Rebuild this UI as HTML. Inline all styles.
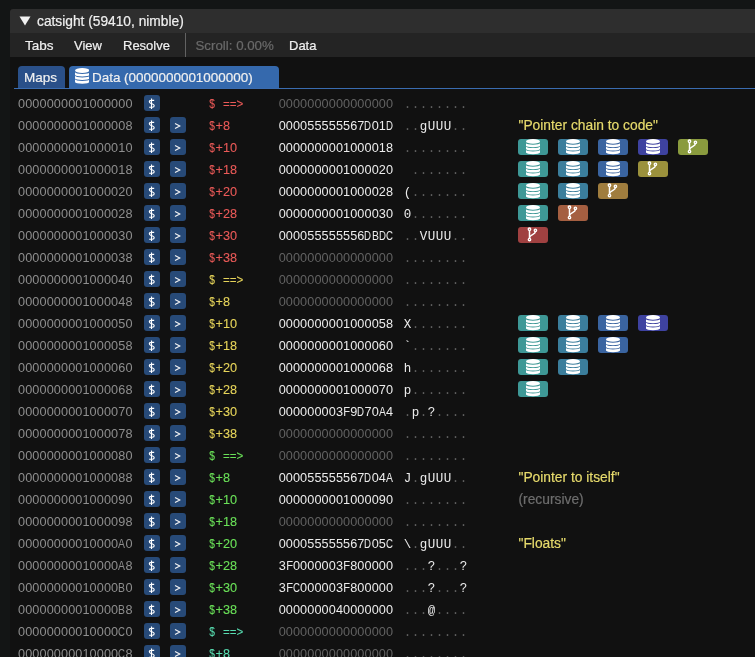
<!DOCTYPE html>
<html><head><meta charset="utf-8"><style>
html,body{margin:0;padding:0;}
body{width:755px;height:657px;overflow:hidden;background:#131515;position:relative;font-family:"Liberation Sans",sans-serif;-webkit-text-stroke:0.2px currentColor;}
.win{position:absolute;left:10px;top:9px;width:760px;height:660px;background:#111111;}
.title{position:absolute;left:10px;top:9px;width:760px;height:24px;background:#2e2e2e;border-top-left-radius:3px;}
.menu{position:absolute;left:10px;top:33px;width:760px;height:24px;background:#242424;}
.t{position:absolute;white-space:pre;color:#f0f0f0;}
.sep{position:absolute;left:185px;top:33px;width:1px;height:24px;background:#626262;}
.tab{position:absolute;top:66px;height:22px;border-radius:4px 4px 0 0;}
.tabline{position:absolute;left:14px;top:88px;width:760px;height:1px;background:#3a6cb0;}
.row{position:absolute;left:0;width:755px;height:22px;font-size:13px;line-height:22px;}
.row span{position:absolute;top:0;white-space:pre;}
.addr{left:18px;color:#8e8e8e;}
.addr b,.data b{font-weight:normal;display:inline-flex;justify-content:center;width:7.17px;}
.addr b.w7,.data b.w7{transform:scaleX(.76)} .addr b.w6,.data b.w6{transform:scaleX(.82)} .addr b.w5,.data b.w5{transform:scaleX(.88)}
.addr,.data{-webkit-text-stroke:0;font-size:12.7px;}
.row u{text-decoration:none;display:inline-block;}
.btn{width:16px;height:16px;top:2px !important;background:#274a78;border-radius:3px;color:#fff;text-align:center;line-height:16px;font-size:12px;}
.b1{left:144px;} .b2{left:170px;} .btn svg{position:absolute;left:0;top:0;}
.btn u{position:absolute;-webkit-text-stroke:0.1px #fff;}
.g1{left:4.8px;top:0.3px;font-size:12px;transform:scaleX(.85);transform-origin:0 50%;}
.g2{left:4.6px;top:1.2px;font-size:12px;transform:scaleX(.85);transform-origin:0 50%;}
.lbl{left:208.5px;font-size:12.7px;-webkit-text-stroke:0.1px currentColor;} .dl{transform:scaleX(.8);transform-origin:10% 50%;} .lbl2{-webkit-text-stroke:0.1px currentColor;left:222.5px;transform:scaleX(.89);transform-origin:0 0;}
.data{left:278.6px;color:#ececec;}
.data.dim{color:#626262;}
.asc{left:403.5px;top:1px !important;-webkit-text-stroke:0;font-family:"Liberation Mono",monospace;font-size:12.5px;}
.asc i{font-style:normal;display:inline-block;width:8px;text-align:center;}
.asc i.p{color:#ececec;} .asc i.np{color:#5e5e5e;}
.ibtn{width:30px;height:16px;border-radius:3px;top:2px !important;}
.ibtn svg{position:absolute;}
.ibtn svg.ic{left:8px;top:0;}
.ibtn svg.ib{left:0;top:0;}
.ann{left:518.5px;top:-0.4px !important;font-size:13.8px;}
</style></head><body><div id="root" style="position:absolute;left:0;top:0;width:755px;height:657px;will-change:transform">
<div class="win"></div>
<div class="title"></div>
<svg style="position:absolute;left:19px;top:16px" width="12" height="10" viewBox="0 0 12 10"><path d="M0.5 0.5H11.5L6 9.5Z" fill="#f0f0f0"/></svg>
<span class="t" style="left:37px;top:13px;font-size:13.75px;line-height:18px;">catsight (59410, nimble)</span>
<div class="menu"></div>
<span class="t" style="left:25px;top:36.7px;font-size:13.5px;line-height:18px;">Tabs</span>
<span class="t" style="left:74px;top:36.7px;font-size:13px;line-height:18px;">View</span>
<span class="t" style="left:123px;top:36.7px;font-size:13px;line-height:18px;">Resolve</span>
<div class="sep"></div>
<span class="t" style="left:195.5px;top:36.7px;font-size:13.3px;line-height:18px;color:#6a6a6a">Scroll: 0.00%</span>
<span class="t" style="left:289px;top:36.7px;font-size:13px;line-height:18px;">Data</span>
<div class="tab" style="left:18px;width:47px;background:#2a5089"></div>
<div class="tab" style="left:69px;width:210px;background:#3569ad"></div>
<div class="tabline"></div>
<span class="t" style="left:24px;top:68.6px;font-size:13.5px;line-height:18px;">Maps</span>
<svg width="14.5" height="16.5" viewBox="0 0 14 16" style="position:absolute;left:74.7px;top:68.1px"><ellipse cx="7" cy="2.4" rx="7" ry="2.4" fill="#fff"/><path d="M0 4.2v2.5a7 1.5 0 0 0 14 0v-2.5a7 1.5 0 0 1 -14 0z" fill="#fff"/><path d="M0 7.6v2.5a7 1.5 0 0 0 14 0v-2.5a7 1.5 0 0 1 -14 0z" fill="#fff"/><path d="M0 11v2.6a7 1.6 0 0 0 14 0v-2.6a7 1.5 0 0 1 -14 0z" fill="#fff"/></svg>
<span class="t" style="left:92px;top:68.6px;font-size:13.45px;line-height:18px;">Data (0000000001000000)</span>
<div class="row" style="top:93px"><span class="addr"><b>0</b><b>0</b><b>0</b><b>0</b><b>0</b><b>0</b><b>0</b><b>0</b><b>0</b><b>1</b><b>0</b><b>0</b><b>0</b><b>0</b><b>0</b><b>0</b></span><span class="btn b1"><svg width="16" height="16" viewBox="0 0 16 16"><path d="M10.2 5.3H7C5.9 5.3 5.3 5.9 5.3 6.8C5.3 7.8 6.1 8.2 7.3 8.6L8.5 9C9.6 9.4 10.2 9.9 10.2 10.8C10.2 11.7 9.5 12.2 8.4 12.2H5.1M7.5 3.6V14" fill="none" stroke="#fff" stroke-width="1.15"/></svg></span><span class="lbl" style="color:#ea5a58"><u class="dl">$</u></span><span class="lbl2" style="color:#ea5a58">==&gt;</span><span class="data dim"><b>0</b><b>0</b><b>0</b><b>0</b><b>0</b><b>0</b><b>0</b><b>0</b><b>0</b><b>0</b><b>0</b><b>0</b><b>0</b><b>0</b><b>0</b><b>0</b></span><span class="asc"><i class="np">.</i><i class="np">.</i><i class="np">.</i><i class="np">.</i><i class="np">.</i><i class="np">.</i><i class="np">.</i><i class="np">.</i></span></div><div class="row" style="top:115px"><span class="addr"><b>0</b><b>0</b><b>0</b><b>0</b><b>0</b><b>0</b><b>0</b><b>0</b><b>0</b><b>1</b><b>0</b><b>0</b><b>0</b><b>0</b><b>0</b><b>8</b></span><span class="btn b1"><svg width="16" height="16" viewBox="0 0 16 16"><path d="M10.2 5.3H7C5.9 5.3 5.3 5.9 5.3 6.8C5.3 7.8 6.1 8.2 7.3 8.6L8.5 9C9.6 9.4 10.2 9.9 10.2 10.8C10.2 11.7 9.5 12.2 8.4 12.2H5.1M7.5 3.6V14" fill="none" stroke="#fff" stroke-width="1.15"/></svg></span><span class="btn b2"><svg width="16" height="16" viewBox="0 0 16 16"><path d="M5 6.5L9.8 9L5 11.5" fill="none" stroke="#f4f4f4" stroke-width="1.1"/></svg></span><span class="lbl" style="color:#ea5a58"><u class="dl">$</u>+8</span><span class="data"><b>0</b><b>0</b><b>0</b><b>0</b><b>5</b><b>5</b><b>5</b><b>5</b><b>5</b><b>5</b><b>6</b><b>7</b><b class="w7">D</b><b>0</b><b>1</b><b class="w7">D</b></span><span class="asc"><i class="np">.</i><i class="np">.</i><i class="p">g</i><i class="p">U</i><i class="p">U</i><i class="p">U</i><i class="np">.</i><i class="np">.</i></span><span class="ann" style="color:#e6da6c">&quot;Pointer chain to code&quot;</span></div><div class="row" style="top:137px"><span class="addr"><b>0</b><b>0</b><b>0</b><b>0</b><b>0</b><b>0</b><b>0</b><b>0</b><b>0</b><b>1</b><b>0</b><b>0</b><b>0</b><b>0</b><b>1</b><b>0</b></span><span class="btn b1"><svg width="16" height="16" viewBox="0 0 16 16"><path d="M10.2 5.3H7C5.9 5.3 5.3 5.9 5.3 6.8C5.3 7.8 6.1 8.2 7.3 8.6L8.5 9C9.6 9.4 10.2 9.9 10.2 10.8C10.2 11.7 9.5 12.2 8.4 12.2H5.1M7.5 3.6V14" fill="none" stroke="#fff" stroke-width="1.15"/></svg></span><span class="btn b2"><svg width="16" height="16" viewBox="0 0 16 16"><path d="M5 6.5L9.8 9L5 11.5" fill="none" stroke="#f4f4f4" stroke-width="1.1"/></svg></span><span class="lbl" style="color:#ea5a58"><u class="dl">$</u>+10</span><span class="data"><b>0</b><b>0</b><b>0</b><b>0</b><b>0</b><b>0</b><b>0</b><b>0</b><b>0</b><b>1</b><b>0</b><b>0</b><b>0</b><b>0</b><b>1</b><b>8</b></span><span class="asc"><i class="np">.</i><i class="np">.</i><i class="np">.</i><i class="np">.</i><i class="np">.</i><i class="np">.</i><i class="np">.</i><i class="np">.</i></span><span class="ibtn" style="left:518px;background:#3e9896"><svg class="ic" width="14" height="16" viewBox="0 0 14 16"><ellipse cx="7" cy="2.4" rx="7" ry="2.4" fill="#fff"/><path d="M0 4.2v2.5a7 1.5 0 0 0 14 0v-2.5a7 1.5 0 0 1 -14 0z" fill="#fff"/><path d="M0 7.6v2.5a7 1.5 0 0 0 14 0v-2.5a7 1.5 0 0 1 -14 0z" fill="#fff"/><path d="M0 11v2.6a7 1.6 0 0 0 14 0v-2.6a7 1.5 0 0 1 -14 0z" fill="#fff"/></svg></span><span class="ibtn" style="left:558px;background:#3b7e9c"><svg class="ic" width="14" height="16" viewBox="0 0 14 16"><ellipse cx="7" cy="2.4" rx="7" ry="2.4" fill="#fff"/><path d="M0 4.2v2.5a7 1.5 0 0 0 14 0v-2.5a7 1.5 0 0 1 -14 0z" fill="#fff"/><path d="M0 7.6v2.5a7 1.5 0 0 0 14 0v-2.5a7 1.5 0 0 1 -14 0z" fill="#fff"/><path d="M0 11v2.6a7 1.6 0 0 0 14 0v-2.6a7 1.5 0 0 1 -14 0z" fill="#fff"/></svg></span><span class="ibtn" style="left:598px;background:#3a64a0"><svg class="ic" width="14" height="16" viewBox="0 0 14 16"><ellipse cx="7" cy="2.4" rx="7" ry="2.4" fill="#fff"/><path d="M0 4.2v2.5a7 1.5 0 0 0 14 0v-2.5a7 1.5 0 0 1 -14 0z" fill="#fff"/><path d="M0 7.6v2.5a7 1.5 0 0 0 14 0v-2.5a7 1.5 0 0 1 -14 0z" fill="#fff"/><path d="M0 11v2.6a7 1.6 0 0 0 14 0v-2.6a7 1.5 0 0 1 -14 0z" fill="#fff"/></svg></span><span class="ibtn" style="left:638px;background:#3e42a0"><svg class="ic" width="14" height="16" viewBox="0 0 14 16"><ellipse cx="7" cy="2.4" rx="7" ry="2.4" fill="#fff"/><path d="M0 4.2v2.5a7 1.5 0 0 0 14 0v-2.5a7 1.5 0 0 1 -14 0z" fill="#fff"/><path d="M0 7.6v2.5a7 1.5 0 0 0 14 0v-2.5a7 1.5 0 0 1 -14 0z" fill="#fff"/><path d="M0 11v2.6a7 1.6 0 0 0 14 0v-2.6a7 1.5 0 0 1 -14 0z" fill="#fff"/></svg></span><span class="ibtn" style="left:678px;background:#8a9b3e"><svg class="ib" width="30" height="16" viewBox="0 0 30 16"><g fill="none" stroke="#fff" stroke-width="1.35"><circle cx="11.5" cy="2.2" r="1.2"/><circle cx="17.4" cy="3.3" r="1.2"/><circle cx="11.5" cy="12.5" r="1.2"/><path d="M11.5 3.4V11.3" stroke-width="1.5"/><path d="M17.4 4.5C17.4 7.8 11.6 7.4 11.5 10.8" stroke-width="1.5"/></g></svg></span></div><div class="row" style="top:159px"><span class="addr"><b>0</b><b>0</b><b>0</b><b>0</b><b>0</b><b>0</b><b>0</b><b>0</b><b>0</b><b>1</b><b>0</b><b>0</b><b>0</b><b>0</b><b>1</b><b>8</b></span><span class="btn b1"><svg width="16" height="16" viewBox="0 0 16 16"><path d="M10.2 5.3H7C5.9 5.3 5.3 5.9 5.3 6.8C5.3 7.8 6.1 8.2 7.3 8.6L8.5 9C9.6 9.4 10.2 9.9 10.2 10.8C10.2 11.7 9.5 12.2 8.4 12.2H5.1M7.5 3.6V14" fill="none" stroke="#fff" stroke-width="1.15"/></svg></span><span class="btn b2"><svg width="16" height="16" viewBox="0 0 16 16"><path d="M5 6.5L9.8 9L5 11.5" fill="none" stroke="#f4f4f4" stroke-width="1.1"/></svg></span><span class="lbl" style="color:#ea5a58"><u class="dl">$</u>+18</span><span class="data"><b>0</b><b>0</b><b>0</b><b>0</b><b>0</b><b>0</b><b>0</b><b>0</b><b>0</b><b>1</b><b>0</b><b>0</b><b>0</b><b>0</b><b>2</b><b>0</b></span><span class="asc"><i class="p">&nbsp;</i><i class="np">.</i><i class="np">.</i><i class="np">.</i><i class="np">.</i><i class="np">.</i><i class="np">.</i><i class="np">.</i></span><span class="ibtn" style="left:518px;background:#3e9896"><svg class="ic" width="14" height="16" viewBox="0 0 14 16"><ellipse cx="7" cy="2.4" rx="7" ry="2.4" fill="#fff"/><path d="M0 4.2v2.5a7 1.5 0 0 0 14 0v-2.5a7 1.5 0 0 1 -14 0z" fill="#fff"/><path d="M0 7.6v2.5a7 1.5 0 0 0 14 0v-2.5a7 1.5 0 0 1 -14 0z" fill="#fff"/><path d="M0 11v2.6a7 1.6 0 0 0 14 0v-2.6a7 1.5 0 0 1 -14 0z" fill="#fff"/></svg></span><span class="ibtn" style="left:558px;background:#3b7e9c"><svg class="ic" width="14" height="16" viewBox="0 0 14 16"><ellipse cx="7" cy="2.4" rx="7" ry="2.4" fill="#fff"/><path d="M0 4.2v2.5a7 1.5 0 0 0 14 0v-2.5a7 1.5 0 0 1 -14 0z" fill="#fff"/><path d="M0 7.6v2.5a7 1.5 0 0 0 14 0v-2.5a7 1.5 0 0 1 -14 0z" fill="#fff"/><path d="M0 11v2.6a7 1.6 0 0 0 14 0v-2.6a7 1.5 0 0 1 -14 0z" fill="#fff"/></svg></span><span class="ibtn" style="left:598px;background:#3a64a0"><svg class="ic" width="14" height="16" viewBox="0 0 14 16"><ellipse cx="7" cy="2.4" rx="7" ry="2.4" fill="#fff"/><path d="M0 4.2v2.5a7 1.5 0 0 0 14 0v-2.5a7 1.5 0 0 1 -14 0z" fill="#fff"/><path d="M0 7.6v2.5a7 1.5 0 0 0 14 0v-2.5a7 1.5 0 0 1 -14 0z" fill="#fff"/><path d="M0 11v2.6a7 1.6 0 0 0 14 0v-2.6a7 1.5 0 0 1 -14 0z" fill="#fff"/></svg></span><span class="ibtn" style="left:638px;background:#9b913c"><svg class="ib" width="30" height="16" viewBox="0 0 30 16"><g fill="none" stroke="#fff" stroke-width="1.35"><circle cx="11.5" cy="2.2" r="1.2"/><circle cx="17.4" cy="3.3" r="1.2"/><circle cx="11.5" cy="12.5" r="1.2"/><path d="M11.5 3.4V11.3" stroke-width="1.5"/><path d="M17.4 4.5C17.4 7.8 11.6 7.4 11.5 10.8" stroke-width="1.5"/></g></svg></span></div><div class="row" style="top:181px"><span class="addr"><b>0</b><b>0</b><b>0</b><b>0</b><b>0</b><b>0</b><b>0</b><b>0</b><b>0</b><b>1</b><b>0</b><b>0</b><b>0</b><b>0</b><b>2</b><b>0</b></span><span class="btn b1"><svg width="16" height="16" viewBox="0 0 16 16"><path d="M10.2 5.3H7C5.9 5.3 5.3 5.9 5.3 6.8C5.3 7.8 6.1 8.2 7.3 8.6L8.5 9C9.6 9.4 10.2 9.9 10.2 10.8C10.2 11.7 9.5 12.2 8.4 12.2H5.1M7.5 3.6V14" fill="none" stroke="#fff" stroke-width="1.15"/></svg></span><span class="btn b2"><svg width="16" height="16" viewBox="0 0 16 16"><path d="M5 6.5L9.8 9L5 11.5" fill="none" stroke="#f4f4f4" stroke-width="1.1"/></svg></span><span class="lbl" style="color:#ea5a58"><u class="dl">$</u>+20</span><span class="data"><b>0</b><b>0</b><b>0</b><b>0</b><b>0</b><b>0</b><b>0</b><b>0</b><b>0</b><b>1</b><b>0</b><b>0</b><b>0</b><b>0</b><b>2</b><b>8</b></span><span class="asc"><i class="p">(</i><i class="np">.</i><i class="np">.</i><i class="np">.</i><i class="np">.</i><i class="np">.</i><i class="np">.</i><i class="np">.</i></span><span class="ibtn" style="left:518px;background:#3e9896"><svg class="ic" width="14" height="16" viewBox="0 0 14 16"><ellipse cx="7" cy="2.4" rx="7" ry="2.4" fill="#fff"/><path d="M0 4.2v2.5a7 1.5 0 0 0 14 0v-2.5a7 1.5 0 0 1 -14 0z" fill="#fff"/><path d="M0 7.6v2.5a7 1.5 0 0 0 14 0v-2.5a7 1.5 0 0 1 -14 0z" fill="#fff"/><path d="M0 11v2.6a7 1.6 0 0 0 14 0v-2.6a7 1.5 0 0 1 -14 0z" fill="#fff"/></svg></span><span class="ibtn" style="left:558px;background:#3b7e9c"><svg class="ic" width="14" height="16" viewBox="0 0 14 16"><ellipse cx="7" cy="2.4" rx="7" ry="2.4" fill="#fff"/><path d="M0 4.2v2.5a7 1.5 0 0 0 14 0v-2.5a7 1.5 0 0 1 -14 0z" fill="#fff"/><path d="M0 7.6v2.5a7 1.5 0 0 0 14 0v-2.5a7 1.5 0 0 1 -14 0z" fill="#fff"/><path d="M0 11v2.6a7 1.6 0 0 0 14 0v-2.6a7 1.5 0 0 1 -14 0z" fill="#fff"/></svg></span><span class="ibtn" style="left:598px;background:#a07d3e"><svg class="ib" width="30" height="16" viewBox="0 0 30 16"><g fill="none" stroke="#fff" stroke-width="1.35"><circle cx="11.5" cy="2.2" r="1.2"/><circle cx="17.4" cy="3.3" r="1.2"/><circle cx="11.5" cy="12.5" r="1.2"/><path d="M11.5 3.4V11.3" stroke-width="1.5"/><path d="M17.4 4.5C17.4 7.8 11.6 7.4 11.5 10.8" stroke-width="1.5"/></g></svg></span></div><div class="row" style="top:203px"><span class="addr"><b>0</b><b>0</b><b>0</b><b>0</b><b>0</b><b>0</b><b>0</b><b>0</b><b>0</b><b>1</b><b>0</b><b>0</b><b>0</b><b>0</b><b>2</b><b>8</b></span><span class="btn b1"><svg width="16" height="16" viewBox="0 0 16 16"><path d="M10.2 5.3H7C5.9 5.3 5.3 5.9 5.3 6.8C5.3 7.8 6.1 8.2 7.3 8.6L8.5 9C9.6 9.4 10.2 9.9 10.2 10.8C10.2 11.7 9.5 12.2 8.4 12.2H5.1M7.5 3.6V14" fill="none" stroke="#fff" stroke-width="1.15"/></svg></span><span class="btn b2"><svg width="16" height="16" viewBox="0 0 16 16"><path d="M5 6.5L9.8 9L5 11.5" fill="none" stroke="#f4f4f4" stroke-width="1.1"/></svg></span><span class="lbl" style="color:#ea5a58"><u class="dl">$</u>+28</span><span class="data"><b>0</b><b>0</b><b>0</b><b>0</b><b>0</b><b>0</b><b>0</b><b>0</b><b>0</b><b>1</b><b>0</b><b>0</b><b>0</b><b>0</b><b>3</b><b>0</b></span><span class="asc"><i class="p">0</i><i class="np">.</i><i class="np">.</i><i class="np">.</i><i class="np">.</i><i class="np">.</i><i class="np">.</i><i class="np">.</i></span><span class="ibtn" style="left:518px;background:#3e9896"><svg class="ic" width="14" height="16" viewBox="0 0 14 16"><ellipse cx="7" cy="2.4" rx="7" ry="2.4" fill="#fff"/><path d="M0 4.2v2.5a7 1.5 0 0 0 14 0v-2.5a7 1.5 0 0 1 -14 0z" fill="#fff"/><path d="M0 7.6v2.5a7 1.5 0 0 0 14 0v-2.5a7 1.5 0 0 1 -14 0z" fill="#fff"/><path d="M0 11v2.6a7 1.6 0 0 0 14 0v-2.6a7 1.5 0 0 1 -14 0z" fill="#fff"/></svg></span><span class="ibtn" style="left:558px;background:#a55f41"><svg class="ib" width="30" height="16" viewBox="0 0 30 16"><g fill="none" stroke="#fff" stroke-width="1.35"><circle cx="11.5" cy="2.2" r="1.2"/><circle cx="17.4" cy="3.3" r="1.2"/><circle cx="11.5" cy="12.5" r="1.2"/><path d="M11.5 3.4V11.3" stroke-width="1.5"/><path d="M17.4 4.5C17.4 7.8 11.6 7.4 11.5 10.8" stroke-width="1.5"/></g></svg></span></div><div class="row" style="top:225px"><span class="addr"><b>0</b><b>0</b><b>0</b><b>0</b><b>0</b><b>0</b><b>0</b><b>0</b><b>0</b><b>1</b><b>0</b><b>0</b><b>0</b><b>0</b><b>3</b><b>0</b></span><span class="btn b1"><svg width="16" height="16" viewBox="0 0 16 16"><path d="M10.2 5.3H7C5.9 5.3 5.3 5.9 5.3 6.8C5.3 7.8 6.1 8.2 7.3 8.6L8.5 9C9.6 9.4 10.2 9.9 10.2 10.8C10.2 11.7 9.5 12.2 8.4 12.2H5.1M7.5 3.6V14" fill="none" stroke="#fff" stroke-width="1.15"/></svg></span><span class="btn b2"><svg width="16" height="16" viewBox="0 0 16 16"><path d="M5 6.5L9.8 9L5 11.5" fill="none" stroke="#f4f4f4" stroke-width="1.1"/></svg></span><span class="lbl" style="color:#ea5a58"><u class="dl">$</u>+30</span><span class="data"><b>0</b><b>0</b><b>0</b><b>0</b><b>5</b><b>5</b><b>5</b><b>5</b><b>5</b><b>5</b><b>5</b><b>6</b><b class="w7">D</b><b class="w6">B</b><b class="w7">D</b><b class="w7">C</b></span><span class="asc"><i class="np">.</i><i class="np">.</i><i class="p">V</i><i class="p">U</i><i class="p">U</i><i class="p">U</i><i class="np">.</i><i class="np">.</i></span><span class="ibtn" style="left:518px;background:#a04141"><svg class="ib" width="30" height="16" viewBox="0 0 30 16"><g fill="none" stroke="#fff" stroke-width="1.35"><circle cx="11.5" cy="2.2" r="1.2"/><circle cx="17.4" cy="3.3" r="1.2"/><circle cx="11.5" cy="12.5" r="1.2"/><path d="M11.5 3.4V11.3" stroke-width="1.5"/><path d="M17.4 4.5C17.4 7.8 11.6 7.4 11.5 10.8" stroke-width="1.5"/></g></svg></span></div><div class="row" style="top:247px"><span class="addr"><b>0</b><b>0</b><b>0</b><b>0</b><b>0</b><b>0</b><b>0</b><b>0</b><b>0</b><b>1</b><b>0</b><b>0</b><b>0</b><b>0</b><b>3</b><b>8</b></span><span class="btn b1"><svg width="16" height="16" viewBox="0 0 16 16"><path d="M10.2 5.3H7C5.9 5.3 5.3 5.9 5.3 6.8C5.3 7.8 6.1 8.2 7.3 8.6L8.5 9C9.6 9.4 10.2 9.9 10.2 10.8C10.2 11.7 9.5 12.2 8.4 12.2H5.1M7.5 3.6V14" fill="none" stroke="#fff" stroke-width="1.15"/></svg></span><span class="btn b2"><svg width="16" height="16" viewBox="0 0 16 16"><path d="M5 6.5L9.8 9L5 11.5" fill="none" stroke="#f4f4f4" stroke-width="1.1"/></svg></span><span class="lbl" style="color:#ea5a58"><u class="dl">$</u>+38</span><span class="data dim"><b>0</b><b>0</b><b>0</b><b>0</b><b>0</b><b>0</b><b>0</b><b>0</b><b>0</b><b>0</b><b>0</b><b>0</b><b>0</b><b>0</b><b>0</b><b>0</b></span><span class="asc"><i class="np">.</i><i class="np">.</i><i class="np">.</i><i class="np">.</i><i class="np">.</i><i class="np">.</i><i class="np">.</i><i class="np">.</i></span></div><div class="row" style="top:269px"><span class="addr"><b>0</b><b>0</b><b>0</b><b>0</b><b>0</b><b>0</b><b>0</b><b>0</b><b>0</b><b>1</b><b>0</b><b>0</b><b>0</b><b>0</b><b>4</b><b>0</b></span><span class="btn b1"><svg width="16" height="16" viewBox="0 0 16 16"><path d="M10.2 5.3H7C5.9 5.3 5.3 5.9 5.3 6.8C5.3 7.8 6.1 8.2 7.3 8.6L8.5 9C9.6 9.4 10.2 9.9 10.2 10.8C10.2 11.7 9.5 12.2 8.4 12.2H5.1M7.5 3.6V14" fill="none" stroke="#fff" stroke-width="1.15"/></svg></span><span class="btn b2"><svg width="16" height="16" viewBox="0 0 16 16"><path d="M5 6.5L9.8 9L5 11.5" fill="none" stroke="#f4f4f4" stroke-width="1.1"/></svg></span><span class="lbl" style="color:#e6d45a"><u class="dl">$</u></span><span class="lbl2" style="color:#e6d45a">==&gt;</span><span class="data dim"><b>0</b><b>0</b><b>0</b><b>0</b><b>0</b><b>0</b><b>0</b><b>0</b><b>0</b><b>0</b><b>0</b><b>0</b><b>0</b><b>0</b><b>0</b><b>0</b></span><span class="asc"><i class="np">.</i><i class="np">.</i><i class="np">.</i><i class="np">.</i><i class="np">.</i><i class="np">.</i><i class="np">.</i><i class="np">.</i></span></div><div class="row" style="top:291px"><span class="addr"><b>0</b><b>0</b><b>0</b><b>0</b><b>0</b><b>0</b><b>0</b><b>0</b><b>0</b><b>1</b><b>0</b><b>0</b><b>0</b><b>0</b><b>4</b><b>8</b></span><span class="btn b1"><svg width="16" height="16" viewBox="0 0 16 16"><path d="M10.2 5.3H7C5.9 5.3 5.3 5.9 5.3 6.8C5.3 7.8 6.1 8.2 7.3 8.6L8.5 9C9.6 9.4 10.2 9.9 10.2 10.8C10.2 11.7 9.5 12.2 8.4 12.2H5.1M7.5 3.6V14" fill="none" stroke="#fff" stroke-width="1.15"/></svg></span><span class="btn b2"><svg width="16" height="16" viewBox="0 0 16 16"><path d="M5 6.5L9.8 9L5 11.5" fill="none" stroke="#f4f4f4" stroke-width="1.1"/></svg></span><span class="lbl" style="color:#e6d45a"><u class="dl">$</u>+8</span><span class="data dim"><b>0</b><b>0</b><b>0</b><b>0</b><b>0</b><b>0</b><b>0</b><b>0</b><b>0</b><b>0</b><b>0</b><b>0</b><b>0</b><b>0</b><b>0</b><b>0</b></span><span class="asc"><i class="np">.</i><i class="np">.</i><i class="np">.</i><i class="np">.</i><i class="np">.</i><i class="np">.</i><i class="np">.</i><i class="np">.</i></span></div><div class="row" style="top:313px"><span class="addr"><b>0</b><b>0</b><b>0</b><b>0</b><b>0</b><b>0</b><b>0</b><b>0</b><b>0</b><b>1</b><b>0</b><b>0</b><b>0</b><b>0</b><b>5</b><b>0</b></span><span class="btn b1"><svg width="16" height="16" viewBox="0 0 16 16"><path d="M10.2 5.3H7C5.9 5.3 5.3 5.9 5.3 6.8C5.3 7.8 6.1 8.2 7.3 8.6L8.5 9C9.6 9.4 10.2 9.9 10.2 10.8C10.2 11.7 9.5 12.2 8.4 12.2H5.1M7.5 3.6V14" fill="none" stroke="#fff" stroke-width="1.15"/></svg></span><span class="btn b2"><svg width="16" height="16" viewBox="0 0 16 16"><path d="M5 6.5L9.8 9L5 11.5" fill="none" stroke="#f4f4f4" stroke-width="1.1"/></svg></span><span class="lbl" style="color:#e6d45a"><u class="dl">$</u>+10</span><span class="data"><b>0</b><b>0</b><b>0</b><b>0</b><b>0</b><b>0</b><b>0</b><b>0</b><b>0</b><b>1</b><b>0</b><b>0</b><b>0</b><b>0</b><b>5</b><b>8</b></span><span class="asc"><i class="p">X</i><i class="np">.</i><i class="np">.</i><i class="np">.</i><i class="np">.</i><i class="np">.</i><i class="np">.</i><i class="np">.</i></span><span class="ibtn" style="left:518px;background:#3e9896"><svg class="ic" width="14" height="16" viewBox="0 0 14 16"><ellipse cx="7" cy="2.4" rx="7" ry="2.4" fill="#fff"/><path d="M0 4.2v2.5a7 1.5 0 0 0 14 0v-2.5a7 1.5 0 0 1 -14 0z" fill="#fff"/><path d="M0 7.6v2.5a7 1.5 0 0 0 14 0v-2.5a7 1.5 0 0 1 -14 0z" fill="#fff"/><path d="M0 11v2.6a7 1.6 0 0 0 14 0v-2.6a7 1.5 0 0 1 -14 0z" fill="#fff"/></svg></span><span class="ibtn" style="left:558px;background:#3b7e9c"><svg class="ic" width="14" height="16" viewBox="0 0 14 16"><ellipse cx="7" cy="2.4" rx="7" ry="2.4" fill="#fff"/><path d="M0 4.2v2.5a7 1.5 0 0 0 14 0v-2.5a7 1.5 0 0 1 -14 0z" fill="#fff"/><path d="M0 7.6v2.5a7 1.5 0 0 0 14 0v-2.5a7 1.5 0 0 1 -14 0z" fill="#fff"/><path d="M0 11v2.6a7 1.6 0 0 0 14 0v-2.6a7 1.5 0 0 1 -14 0z" fill="#fff"/></svg></span><span class="ibtn" style="left:598px;background:#3a64a0"><svg class="ic" width="14" height="16" viewBox="0 0 14 16"><ellipse cx="7" cy="2.4" rx="7" ry="2.4" fill="#fff"/><path d="M0 4.2v2.5a7 1.5 0 0 0 14 0v-2.5a7 1.5 0 0 1 -14 0z" fill="#fff"/><path d="M0 7.6v2.5a7 1.5 0 0 0 14 0v-2.5a7 1.5 0 0 1 -14 0z" fill="#fff"/><path d="M0 11v2.6a7 1.6 0 0 0 14 0v-2.6a7 1.5 0 0 1 -14 0z" fill="#fff"/></svg></span><span class="ibtn" style="left:638px;background:#3e42a0"><svg class="ic" width="14" height="16" viewBox="0 0 14 16"><ellipse cx="7" cy="2.4" rx="7" ry="2.4" fill="#fff"/><path d="M0 4.2v2.5a7 1.5 0 0 0 14 0v-2.5a7 1.5 0 0 1 -14 0z" fill="#fff"/><path d="M0 7.6v2.5a7 1.5 0 0 0 14 0v-2.5a7 1.5 0 0 1 -14 0z" fill="#fff"/><path d="M0 11v2.6a7 1.6 0 0 0 14 0v-2.6a7 1.5 0 0 1 -14 0z" fill="#fff"/></svg></span></div><div class="row" style="top:335px"><span class="addr"><b>0</b><b>0</b><b>0</b><b>0</b><b>0</b><b>0</b><b>0</b><b>0</b><b>0</b><b>1</b><b>0</b><b>0</b><b>0</b><b>0</b><b>5</b><b>8</b></span><span class="btn b1"><svg width="16" height="16" viewBox="0 0 16 16"><path d="M10.2 5.3H7C5.9 5.3 5.3 5.9 5.3 6.8C5.3 7.8 6.1 8.2 7.3 8.6L8.5 9C9.6 9.4 10.2 9.9 10.2 10.8C10.2 11.7 9.5 12.2 8.4 12.2H5.1M7.5 3.6V14" fill="none" stroke="#fff" stroke-width="1.15"/></svg></span><span class="btn b2"><svg width="16" height="16" viewBox="0 0 16 16"><path d="M5 6.5L9.8 9L5 11.5" fill="none" stroke="#f4f4f4" stroke-width="1.1"/></svg></span><span class="lbl" style="color:#e6d45a"><u class="dl">$</u>+18</span><span class="data"><b>0</b><b>0</b><b>0</b><b>0</b><b>0</b><b>0</b><b>0</b><b>0</b><b>0</b><b>1</b><b>0</b><b>0</b><b>0</b><b>0</b><b>6</b><b>0</b></span><span class="asc"><i class="p">`</i><i class="np">.</i><i class="np">.</i><i class="np">.</i><i class="np">.</i><i class="np">.</i><i class="np">.</i><i class="np">.</i></span><span class="ibtn" style="left:518px;background:#3e9896"><svg class="ic" width="14" height="16" viewBox="0 0 14 16"><ellipse cx="7" cy="2.4" rx="7" ry="2.4" fill="#fff"/><path d="M0 4.2v2.5a7 1.5 0 0 0 14 0v-2.5a7 1.5 0 0 1 -14 0z" fill="#fff"/><path d="M0 7.6v2.5a7 1.5 0 0 0 14 0v-2.5a7 1.5 0 0 1 -14 0z" fill="#fff"/><path d="M0 11v2.6a7 1.6 0 0 0 14 0v-2.6a7 1.5 0 0 1 -14 0z" fill="#fff"/></svg></span><span class="ibtn" style="left:558px;background:#3b7e9c"><svg class="ic" width="14" height="16" viewBox="0 0 14 16"><ellipse cx="7" cy="2.4" rx="7" ry="2.4" fill="#fff"/><path d="M0 4.2v2.5a7 1.5 0 0 0 14 0v-2.5a7 1.5 0 0 1 -14 0z" fill="#fff"/><path d="M0 7.6v2.5a7 1.5 0 0 0 14 0v-2.5a7 1.5 0 0 1 -14 0z" fill="#fff"/><path d="M0 11v2.6a7 1.6 0 0 0 14 0v-2.6a7 1.5 0 0 1 -14 0z" fill="#fff"/></svg></span><span class="ibtn" style="left:598px;background:#3a64a0"><svg class="ic" width="14" height="16" viewBox="0 0 14 16"><ellipse cx="7" cy="2.4" rx="7" ry="2.4" fill="#fff"/><path d="M0 4.2v2.5a7 1.5 0 0 0 14 0v-2.5a7 1.5 0 0 1 -14 0z" fill="#fff"/><path d="M0 7.6v2.5a7 1.5 0 0 0 14 0v-2.5a7 1.5 0 0 1 -14 0z" fill="#fff"/><path d="M0 11v2.6a7 1.6 0 0 0 14 0v-2.6a7 1.5 0 0 1 -14 0z" fill="#fff"/></svg></span></div><div class="row" style="top:357px"><span class="addr"><b>0</b><b>0</b><b>0</b><b>0</b><b>0</b><b>0</b><b>0</b><b>0</b><b>0</b><b>1</b><b>0</b><b>0</b><b>0</b><b>0</b><b>6</b><b>0</b></span><span class="btn b1"><svg width="16" height="16" viewBox="0 0 16 16"><path d="M10.2 5.3H7C5.9 5.3 5.3 5.9 5.3 6.8C5.3 7.8 6.1 8.2 7.3 8.6L8.5 9C9.6 9.4 10.2 9.9 10.2 10.8C10.2 11.7 9.5 12.2 8.4 12.2H5.1M7.5 3.6V14" fill="none" stroke="#fff" stroke-width="1.15"/></svg></span><span class="btn b2"><svg width="16" height="16" viewBox="0 0 16 16"><path d="M5 6.5L9.8 9L5 11.5" fill="none" stroke="#f4f4f4" stroke-width="1.1"/></svg></span><span class="lbl" style="color:#e6d45a"><u class="dl">$</u>+20</span><span class="data"><b>0</b><b>0</b><b>0</b><b>0</b><b>0</b><b>0</b><b>0</b><b>0</b><b>0</b><b>1</b><b>0</b><b>0</b><b>0</b><b>0</b><b>6</b><b>8</b></span><span class="asc"><i class="p">h</i><i class="np">.</i><i class="np">.</i><i class="np">.</i><i class="np">.</i><i class="np">.</i><i class="np">.</i><i class="np">.</i></span><span class="ibtn" style="left:518px;background:#3e9896"><svg class="ic" width="14" height="16" viewBox="0 0 14 16"><ellipse cx="7" cy="2.4" rx="7" ry="2.4" fill="#fff"/><path d="M0 4.2v2.5a7 1.5 0 0 0 14 0v-2.5a7 1.5 0 0 1 -14 0z" fill="#fff"/><path d="M0 7.6v2.5a7 1.5 0 0 0 14 0v-2.5a7 1.5 0 0 1 -14 0z" fill="#fff"/><path d="M0 11v2.6a7 1.6 0 0 0 14 0v-2.6a7 1.5 0 0 1 -14 0z" fill="#fff"/></svg></span><span class="ibtn" style="left:558px;background:#3b7e9c"><svg class="ic" width="14" height="16" viewBox="0 0 14 16"><ellipse cx="7" cy="2.4" rx="7" ry="2.4" fill="#fff"/><path d="M0 4.2v2.5a7 1.5 0 0 0 14 0v-2.5a7 1.5 0 0 1 -14 0z" fill="#fff"/><path d="M0 7.6v2.5a7 1.5 0 0 0 14 0v-2.5a7 1.5 0 0 1 -14 0z" fill="#fff"/><path d="M0 11v2.6a7 1.6 0 0 0 14 0v-2.6a7 1.5 0 0 1 -14 0z" fill="#fff"/></svg></span></div><div class="row" style="top:379px"><span class="addr"><b>0</b><b>0</b><b>0</b><b>0</b><b>0</b><b>0</b><b>0</b><b>0</b><b>0</b><b>1</b><b>0</b><b>0</b><b>0</b><b>0</b><b>6</b><b>8</b></span><span class="btn b1"><svg width="16" height="16" viewBox="0 0 16 16"><path d="M10.2 5.3H7C5.9 5.3 5.3 5.9 5.3 6.8C5.3 7.8 6.1 8.2 7.3 8.6L8.5 9C9.6 9.4 10.2 9.9 10.2 10.8C10.2 11.7 9.5 12.2 8.4 12.2H5.1M7.5 3.6V14" fill="none" stroke="#fff" stroke-width="1.15"/></svg></span><span class="btn b2"><svg width="16" height="16" viewBox="0 0 16 16"><path d="M5 6.5L9.8 9L5 11.5" fill="none" stroke="#f4f4f4" stroke-width="1.1"/></svg></span><span class="lbl" style="color:#e6d45a"><u class="dl">$</u>+28</span><span class="data"><b>0</b><b>0</b><b>0</b><b>0</b><b>0</b><b>0</b><b>0</b><b>0</b><b>0</b><b>1</b><b>0</b><b>0</b><b>0</b><b>0</b><b>7</b><b>0</b></span><span class="asc"><i class="p">p</i><i class="np">.</i><i class="np">.</i><i class="np">.</i><i class="np">.</i><i class="np">.</i><i class="np">.</i><i class="np">.</i></span><span class="ibtn" style="left:518px;background:#3e9896"><svg class="ic" width="14" height="16" viewBox="0 0 14 16"><ellipse cx="7" cy="2.4" rx="7" ry="2.4" fill="#fff"/><path d="M0 4.2v2.5a7 1.5 0 0 0 14 0v-2.5a7 1.5 0 0 1 -14 0z" fill="#fff"/><path d="M0 7.6v2.5a7 1.5 0 0 0 14 0v-2.5a7 1.5 0 0 1 -14 0z" fill="#fff"/><path d="M0 11v2.6a7 1.6 0 0 0 14 0v-2.6a7 1.5 0 0 1 -14 0z" fill="#fff"/></svg></span></div><div class="row" style="top:401px"><span class="addr"><b>0</b><b>0</b><b>0</b><b>0</b><b>0</b><b>0</b><b>0</b><b>0</b><b>0</b><b>1</b><b>0</b><b>0</b><b>0</b><b>0</b><b>7</b><b>0</b></span><span class="btn b1"><svg width="16" height="16" viewBox="0 0 16 16"><path d="M10.2 5.3H7C5.9 5.3 5.3 5.9 5.3 6.8C5.3 7.8 6.1 8.2 7.3 8.6L8.5 9C9.6 9.4 10.2 9.9 10.2 10.8C10.2 11.7 9.5 12.2 8.4 12.2H5.1M7.5 3.6V14" fill="none" stroke="#fff" stroke-width="1.15"/></svg></span><span class="btn b2"><svg width="16" height="16" viewBox="0 0 16 16"><path d="M5 6.5L9.8 9L5 11.5" fill="none" stroke="#f4f4f4" stroke-width="1.1"/></svg></span><span class="lbl" style="color:#e6d45a"><u class="dl">$</u>+30</span><span class="data"><b>0</b><b>0</b><b>0</b><b>0</b><b>0</b><b>0</b><b>0</b><b>0</b><b>3</b><b class="w5">F</b><b>9</b><b class="w7">D</b><b>7</b><b>0</b><b class="w6">A</b><b>4</b></span><span class="asc"><i class="np">.</i><i class="p">p</i><i class="np">.</i><i class="p">?</i><i class="np">.</i><i class="np">.</i><i class="np">.</i><i class="np">.</i></span></div><div class="row" style="top:423px"><span class="addr"><b>0</b><b>0</b><b>0</b><b>0</b><b>0</b><b>0</b><b>0</b><b>0</b><b>0</b><b>1</b><b>0</b><b>0</b><b>0</b><b>0</b><b>7</b><b>8</b></span><span class="btn b1"><svg width="16" height="16" viewBox="0 0 16 16"><path d="M10.2 5.3H7C5.9 5.3 5.3 5.9 5.3 6.8C5.3 7.8 6.1 8.2 7.3 8.6L8.5 9C9.6 9.4 10.2 9.9 10.2 10.8C10.2 11.7 9.5 12.2 8.4 12.2H5.1M7.5 3.6V14" fill="none" stroke="#fff" stroke-width="1.15"/></svg></span><span class="btn b2"><svg width="16" height="16" viewBox="0 0 16 16"><path d="M5 6.5L9.8 9L5 11.5" fill="none" stroke="#f4f4f4" stroke-width="1.1"/></svg></span><span class="lbl" style="color:#e6d45a"><u class="dl">$</u>+38</span><span class="data dim"><b>0</b><b>0</b><b>0</b><b>0</b><b>0</b><b>0</b><b>0</b><b>0</b><b>0</b><b>0</b><b>0</b><b>0</b><b>0</b><b>0</b><b>0</b><b>0</b></span><span class="asc"><i class="np">.</i><i class="np">.</i><i class="np">.</i><i class="np">.</i><i class="np">.</i><i class="np">.</i><i class="np">.</i><i class="np">.</i></span></div><div class="row" style="top:445px"><span class="addr"><b>0</b><b>0</b><b>0</b><b>0</b><b>0</b><b>0</b><b>0</b><b>0</b><b>0</b><b>1</b><b>0</b><b>0</b><b>0</b><b>0</b><b>8</b><b>0</b></span><span class="btn b1"><svg width="16" height="16" viewBox="0 0 16 16"><path d="M10.2 5.3H7C5.9 5.3 5.3 5.9 5.3 6.8C5.3 7.8 6.1 8.2 7.3 8.6L8.5 9C9.6 9.4 10.2 9.9 10.2 10.8C10.2 11.7 9.5 12.2 8.4 12.2H5.1M7.5 3.6V14" fill="none" stroke="#fff" stroke-width="1.15"/></svg></span><span class="btn b2"><svg width="16" height="16" viewBox="0 0 16 16"><path d="M5 6.5L9.8 9L5 11.5" fill="none" stroke="#f4f4f4" stroke-width="1.1"/></svg></span><span class="lbl" style="color:#6ae058"><u class="dl">$</u></span><span class="lbl2" style="color:#6ae058">==&gt;</span><span class="data dim"><b>0</b><b>0</b><b>0</b><b>0</b><b>0</b><b>0</b><b>0</b><b>0</b><b>0</b><b>0</b><b>0</b><b>0</b><b>0</b><b>0</b><b>0</b><b>0</b></span><span class="asc"><i class="np">.</i><i class="np">.</i><i class="np">.</i><i class="np">.</i><i class="np">.</i><i class="np">.</i><i class="np">.</i><i class="np">.</i></span></div><div class="row" style="top:467px"><span class="addr"><b>0</b><b>0</b><b>0</b><b>0</b><b>0</b><b>0</b><b>0</b><b>0</b><b>0</b><b>1</b><b>0</b><b>0</b><b>0</b><b>0</b><b>8</b><b>8</b></span><span class="btn b1"><svg width="16" height="16" viewBox="0 0 16 16"><path d="M10.2 5.3H7C5.9 5.3 5.3 5.9 5.3 6.8C5.3 7.8 6.1 8.2 7.3 8.6L8.5 9C9.6 9.4 10.2 9.9 10.2 10.8C10.2 11.7 9.5 12.2 8.4 12.2H5.1M7.5 3.6V14" fill="none" stroke="#fff" stroke-width="1.15"/></svg></span><span class="btn b2"><svg width="16" height="16" viewBox="0 0 16 16"><path d="M5 6.5L9.8 9L5 11.5" fill="none" stroke="#f4f4f4" stroke-width="1.1"/></svg></span><span class="lbl" style="color:#6ae058"><u class="dl">$</u>+8</span><span class="data"><b>0</b><b>0</b><b>0</b><b>0</b><b>5</b><b>5</b><b>5</b><b>5</b><b>5</b><b>5</b><b>6</b><b>7</b><b class="w7">D</b><b>0</b><b>4</b><b class="w6">A</b></span><span class="asc"><i class="p">J</i><i class="np">.</i><i class="p">g</i><i class="p">U</i><i class="p">U</i><i class="p">U</i><i class="np">.</i><i class="np">.</i></span><span class="ann" style="color:#e6da6c">&quot;Pointer to itself&quot;</span></div><div class="row" style="top:489px"><span class="addr"><b>0</b><b>0</b><b>0</b><b>0</b><b>0</b><b>0</b><b>0</b><b>0</b><b>0</b><b>1</b><b>0</b><b>0</b><b>0</b><b>0</b><b>9</b><b>0</b></span><span class="btn b1"><svg width="16" height="16" viewBox="0 0 16 16"><path d="M10.2 5.3H7C5.9 5.3 5.3 5.9 5.3 6.8C5.3 7.8 6.1 8.2 7.3 8.6L8.5 9C9.6 9.4 10.2 9.9 10.2 10.8C10.2 11.7 9.5 12.2 8.4 12.2H5.1M7.5 3.6V14" fill="none" stroke="#fff" stroke-width="1.15"/></svg></span><span class="btn b2"><svg width="16" height="16" viewBox="0 0 16 16"><path d="M5 6.5L9.8 9L5 11.5" fill="none" stroke="#f4f4f4" stroke-width="1.1"/></svg></span><span class="lbl" style="color:#6ae058"><u class="dl">$</u>+10</span><span class="data"><b>0</b><b>0</b><b>0</b><b>0</b><b>0</b><b>0</b><b>0</b><b>0</b><b>0</b><b>1</b><b>0</b><b>0</b><b>0</b><b>0</b><b>9</b><b>0</b></span><span class="asc"><i class="np">.</i><i class="np">.</i><i class="np">.</i><i class="np">.</i><i class="np">.</i><i class="np">.</i><i class="np">.</i><i class="np">.</i></span><span class="ann" style="color:#6e6e6e">(recursive)</span></div><div class="row" style="top:511px"><span class="addr"><b>0</b><b>0</b><b>0</b><b>0</b><b>0</b><b>0</b><b>0</b><b>0</b><b>0</b><b>1</b><b>0</b><b>0</b><b>0</b><b>0</b><b>9</b><b>8</b></span><span class="btn b1"><svg width="16" height="16" viewBox="0 0 16 16"><path d="M10.2 5.3H7C5.9 5.3 5.3 5.9 5.3 6.8C5.3 7.8 6.1 8.2 7.3 8.6L8.5 9C9.6 9.4 10.2 9.9 10.2 10.8C10.2 11.7 9.5 12.2 8.4 12.2H5.1M7.5 3.6V14" fill="none" stroke="#fff" stroke-width="1.15"/></svg></span><span class="btn b2"><svg width="16" height="16" viewBox="0 0 16 16"><path d="M5 6.5L9.8 9L5 11.5" fill="none" stroke="#f4f4f4" stroke-width="1.1"/></svg></span><span class="lbl" style="color:#6ae058"><u class="dl">$</u>+18</span><span class="data dim"><b>0</b><b>0</b><b>0</b><b>0</b><b>0</b><b>0</b><b>0</b><b>0</b><b>0</b><b>0</b><b>0</b><b>0</b><b>0</b><b>0</b><b>0</b><b>0</b></span><span class="asc"><i class="np">.</i><i class="np">.</i><i class="np">.</i><i class="np">.</i><i class="np">.</i><i class="np">.</i><i class="np">.</i><i class="np">.</i></span></div><div class="row" style="top:533px"><span class="addr"><b>0</b><b>0</b><b>0</b><b>0</b><b>0</b><b>0</b><b>0</b><b>0</b><b>0</b><b>1</b><b>0</b><b>0</b><b>0</b><b>0</b><b class="w6">A</b><b>0</b></span><span class="btn b1"><svg width="16" height="16" viewBox="0 0 16 16"><path d="M10.2 5.3H7C5.9 5.3 5.3 5.9 5.3 6.8C5.3 7.8 6.1 8.2 7.3 8.6L8.5 9C9.6 9.4 10.2 9.9 10.2 10.8C10.2 11.7 9.5 12.2 8.4 12.2H5.1M7.5 3.6V14" fill="none" stroke="#fff" stroke-width="1.15"/></svg></span><span class="btn b2"><svg width="16" height="16" viewBox="0 0 16 16"><path d="M5 6.5L9.8 9L5 11.5" fill="none" stroke="#f4f4f4" stroke-width="1.1"/></svg></span><span class="lbl" style="color:#6ae058"><u class="dl">$</u>+20</span><span class="data"><b>0</b><b>0</b><b>0</b><b>0</b><b>5</b><b>5</b><b>5</b><b>5</b><b>5</b><b>5</b><b>6</b><b>7</b><b class="w7">D</b><b>0</b><b>5</b><b class="w7">C</b></span><span class="asc"><i class="p">\</i><i class="np">.</i><i class="p">g</i><i class="p">U</i><i class="p">U</i><i class="p">U</i><i class="np">.</i><i class="np">.</i></span><span class="ann" style="color:#e6da6c">&quot;Floats&quot;</span></div><div class="row" style="top:555px"><span class="addr"><b>0</b><b>0</b><b>0</b><b>0</b><b>0</b><b>0</b><b>0</b><b>0</b><b>0</b><b>1</b><b>0</b><b>0</b><b>0</b><b>0</b><b class="w6">A</b><b>8</b></span><span class="btn b1"><svg width="16" height="16" viewBox="0 0 16 16"><path d="M10.2 5.3H7C5.9 5.3 5.3 5.9 5.3 6.8C5.3 7.8 6.1 8.2 7.3 8.6L8.5 9C9.6 9.4 10.2 9.9 10.2 10.8C10.2 11.7 9.5 12.2 8.4 12.2H5.1M7.5 3.6V14" fill="none" stroke="#fff" stroke-width="1.15"/></svg></span><span class="btn b2"><svg width="16" height="16" viewBox="0 0 16 16"><path d="M5 6.5L9.8 9L5 11.5" fill="none" stroke="#f4f4f4" stroke-width="1.1"/></svg></span><span class="lbl" style="color:#6ae058"><u class="dl">$</u>+28</span><span class="data"><b>3</b><b class="w5">F</b><b>0</b><b>0</b><b>0</b><b>0</b><b>0</b><b>0</b><b>3</b><b class="w5">F</b><b>8</b><b>0</b><b>0</b><b>0</b><b>0</b><b>0</b></span><span class="asc"><i class="np">.</i><i class="np">.</i><i class="np">.</i><i class="p">?</i><i class="np">.</i><i class="np">.</i><i class="np">.</i><i class="p">?</i></span></div><div class="row" style="top:577px"><span class="addr"><b>0</b><b>0</b><b>0</b><b>0</b><b>0</b><b>0</b><b>0</b><b>0</b><b>0</b><b>1</b><b>0</b><b>0</b><b>0</b><b>0</b><b class="w6">B</b><b>0</b></span><span class="btn b1"><svg width="16" height="16" viewBox="0 0 16 16"><path d="M10.2 5.3H7C5.9 5.3 5.3 5.9 5.3 6.8C5.3 7.8 6.1 8.2 7.3 8.6L8.5 9C9.6 9.4 10.2 9.9 10.2 10.8C10.2 11.7 9.5 12.2 8.4 12.2H5.1M7.5 3.6V14" fill="none" stroke="#fff" stroke-width="1.15"/></svg></span><span class="btn b2"><svg width="16" height="16" viewBox="0 0 16 16"><path d="M5 6.5L9.8 9L5 11.5" fill="none" stroke="#f4f4f4" stroke-width="1.1"/></svg></span><span class="lbl" style="color:#6ae058"><u class="dl">$</u>+30</span><span class="data"><b>3</b><b class="w5">F</b><b class="w7">C</b><b>0</b><b>0</b><b>0</b><b>0</b><b>0</b><b>3</b><b class="w5">F</b><b>8</b><b>0</b><b>0</b><b>0</b><b>0</b><b>0</b></span><span class="asc"><i class="np">.</i><i class="np">.</i><i class="np">.</i><i class="p">?</i><i class="np">.</i><i class="np">.</i><i class="np">.</i><i class="p">?</i></span></div><div class="row" style="top:599px"><span class="addr"><b>0</b><b>0</b><b>0</b><b>0</b><b>0</b><b>0</b><b>0</b><b>0</b><b>0</b><b>1</b><b>0</b><b>0</b><b>0</b><b>0</b><b class="w6">B</b><b>8</b></span><span class="btn b1"><svg width="16" height="16" viewBox="0 0 16 16"><path d="M10.2 5.3H7C5.9 5.3 5.3 5.9 5.3 6.8C5.3 7.8 6.1 8.2 7.3 8.6L8.5 9C9.6 9.4 10.2 9.9 10.2 10.8C10.2 11.7 9.5 12.2 8.4 12.2H5.1M7.5 3.6V14" fill="none" stroke="#fff" stroke-width="1.15"/></svg></span><span class="btn b2"><svg width="16" height="16" viewBox="0 0 16 16"><path d="M5 6.5L9.8 9L5 11.5" fill="none" stroke="#f4f4f4" stroke-width="1.1"/></svg></span><span class="lbl" style="color:#6ae058"><u class="dl">$</u>+38</span><span class="data"><b>0</b><b>0</b><b>0</b><b>0</b><b>0</b><b>0</b><b>0</b><b>0</b><b>4</b><b>0</b><b>0</b><b>0</b><b>0</b><b>0</b><b>0</b><b>0</b></span><span class="asc"><i class="np">.</i><i class="np">.</i><i class="np">.</i><i class="p">@</i><i class="np">.</i><i class="np">.</i><i class="np">.</i><i class="np">.</i></span></div><div class="row" style="top:621px"><span class="addr"><b>0</b><b>0</b><b>0</b><b>0</b><b>0</b><b>0</b><b>0</b><b>0</b><b>0</b><b>1</b><b>0</b><b>0</b><b>0</b><b>0</b><b class="w7">C</b><b>0</b></span><span class="btn b1"><svg width="16" height="16" viewBox="0 0 16 16"><path d="M10.2 5.3H7C5.9 5.3 5.3 5.9 5.3 6.8C5.3 7.8 6.1 8.2 7.3 8.6L8.5 9C9.6 9.4 10.2 9.9 10.2 10.8C10.2 11.7 9.5 12.2 8.4 12.2H5.1M7.5 3.6V14" fill="none" stroke="#fff" stroke-width="1.15"/></svg></span><span class="btn b2"><svg width="16" height="16" viewBox="0 0 16 16"><path d="M5 6.5L9.8 9L5 11.5" fill="none" stroke="#f4f4f4" stroke-width="1.1"/></svg></span><span class="lbl" style="color:#58dcb0"><u class="dl">$</u></span><span class="lbl2" style="color:#58dcb0">==&gt;</span><span class="data dim"><b>0</b><b>0</b><b>0</b><b>0</b><b>0</b><b>0</b><b>0</b><b>0</b><b>0</b><b>0</b><b>0</b><b>0</b><b>0</b><b>0</b><b>0</b><b>0</b></span><span class="asc"><i class="np">.</i><i class="np">.</i><i class="np">.</i><i class="np">.</i><i class="np">.</i><i class="np">.</i><i class="np">.</i><i class="np">.</i></span></div><div class="row" style="top:643px"><span class="addr"><b>0</b><b>0</b><b>0</b><b>0</b><b>0</b><b>0</b><b>0</b><b>0</b><b>0</b><b>1</b><b>0</b><b>0</b><b>0</b><b>0</b><b class="w7">C</b><b>8</b></span><span class="btn b1"><svg width="16" height="16" viewBox="0 0 16 16"><path d="M10.2 5.3H7C5.9 5.3 5.3 5.9 5.3 6.8C5.3 7.8 6.1 8.2 7.3 8.6L8.5 9C9.6 9.4 10.2 9.9 10.2 10.8C10.2 11.7 9.5 12.2 8.4 12.2H5.1M7.5 3.6V14" fill="none" stroke="#fff" stroke-width="1.15"/></svg></span><span class="btn b2"><svg width="16" height="16" viewBox="0 0 16 16"><path d="M5 6.5L9.8 9L5 11.5" fill="none" stroke="#f4f4f4" stroke-width="1.1"/></svg></span><span class="lbl" style="color:#58dcb0"><u class="dl">$</u>+8</span><span class="data dim"><b>0</b><b>0</b><b>0</b><b>0</b><b>0</b><b>0</b><b>0</b><b>0</b><b>0</b><b>0</b><b>0</b><b>0</b><b>0</b><b>0</b><b>0</b><b>0</b></span><span class="asc"><i class="np">.</i><i class="np">.</i><i class="np">.</i><i class="np">.</i><i class="np">.</i><i class="np">.</i><i class="np">.</i><i class="np">.</i></span></div>
</div></body></html>
